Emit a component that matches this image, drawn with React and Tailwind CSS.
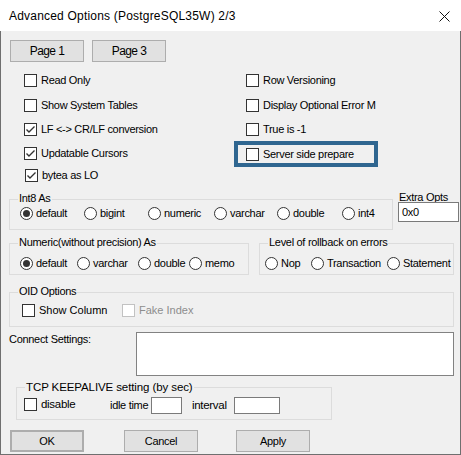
import React from "react";

function Check({ checked, disabled, className = "" }) {
  return (
    <div
      className={`w-[13px] h-[13px] shrink-0 border bg-white flex items-center justify-center ${
        disabled ? "border-[#c2c2c2]" : "border-[#333333]"
      } ${className}`}
    >
      {checked && (
        <svg width="11" height="11" viewBox="0 0 11 11">
          <polyline points="1.5,5.5 4,8 9.5,2.5" fill="none" stroke="#333333" strokeWidth="1.4" />
        </svg>
      )}
    </div>
  );
}

function CheckRow({ label, checked, className = "", disabled, textClass = "" }) {
  return (
    <div className={`flex items-center h-[13px] ${className}`}>
      <Check checked={checked} disabled={disabled} />
      <span className={`ml-[4px] whitespace-nowrap leading-[13px] ${disabled ? "text-[#8d8d8d]" : ""} ${textClass}`}>
        {label}
      </span>
    </div>
  );
}

function Radio({ label, checked, className = "" }) {
  return (
    <div className={`flex items-center h-[13px] shrink-0 ${className}`}>
      <div className="w-[13px] h-[13px] rounded-full border border-[#333333] bg-white flex items-center justify-center shrink-0">
        {checked && <div className="w-[7px] h-[7px] rounded-full bg-[#333333]" />}
      </div>
      <span className="ml-[3px] whitespace-nowrap leading-[13px]">{label}</span>
    </div>
  );
}

function Group({ label, className = "", boxClass = "", labelClass = "", children }) {
  return (
    <div className={`pt-[7px] ${className}`}>
      <div className={`relative border border-[#dcdcdc] ${boxClass}`}>
        <span
          className={`absolute -top-[8px] left-[8px] px-[1px] bg-[#f0f0f0] leading-[13px] whitespace-nowrap ${labelClass}`}
        >
          {label}
        </span>
        {children}
      </div>
    </div>
  );
}

function Btn({ children, className = "" }) {
  return (
    <div
      className={`h-[22px] w-[74px] flex items-center justify-center bg-[#e1e1e1] border border-[#adadad] ${className}`}
    >
      {children}
    </div>
  );
}

export default function App() {
  return (
    <div className="w-[461px] h-[455px] flex flex-col bg-[#f0f0f0] text-black text-[11px] tracking-[-0.3px] font-['Liberation_Sans',Arial,sans-serif] overflow-hidden">
      {/* Title bar */}
      <div className="h-[31px] shrink-0 bg-white flex items-center justify-between pl-[9px] pr-[11px]">
        <span className="text-[12px] leading-[16px] tracking-[0.2px] whitespace-nowrap">
          Advanced Options (PostgreSQL35W) 2/3
        </span>
        <svg width="11" height="11" viewBox="0 0 11 11" className="mt-[1px]">
          <path d="M0.5 0.5 L10.5 10.5 M10.5 0.5 L0.5 10.5" stroke="#111" strokeWidth="1" />
        </svg>
      </div>

      {/* Client area */}
      <div className="flex-1 flex flex-col border-x border-b border-[#6f6f6f]">
        {/* Page buttons */}
        <div className="flex mt-[9px] ml-[9px] gap-[8px] text-[12px] tracking-[-0.6px]">
          <Btn className="w-[58px]">Page 1</Btn>
          <Btn className="w-[58px]">Page 3</Btn>
        </div>

        {/* Checkboxes */}
        <div className="flex mt-[12px] ml-[23px]">
          <div className="w-[222px] flex flex-col">
            <CheckRow label="Read Only" />
            <CheckRow label="Show System Tables" className="mt-[12px]" />
            <CheckRow label="LF <-> CR/LF conversion" checked className="mt-[11px]" />
            <CheckRow label="Updatable Cursors" checked className="mt-[11px]" />
            <CheckRow label="bytea as LO" checked className="mt-[9px] ml-[1px]" />
          </div>
          <div className="flex flex-col">
            <CheckRow label="Row Versioning" />
            <CheckRow label="Display Optional Error M" className="mt-[12px]" />
            <CheckRow label="True is -1" className="mt-[11px]" />
            <div className="-ml-[12px] mt-[5px] w-[144px] h-[26px] border-4 border-[#2f6690] pl-[8px] flex items-center">
              <CheckRow label="Server side prepare" />
            </div>
          </div>
        </div>

        {/* Int8 row */}
        <div className="flex mt-[10px] ml-[8px]">
          <Group label="Int8 As" className="w-[384px]" boxClass="h-[31px] flex pt-[7px] pl-[10px]">
            <Radio label="default" checked className="w-[64px]" />
            <Radio label="bigint" className="w-[64px]" />
            <Radio label="numeric" className="w-[66px]" />
            <Radio label="varchar" className="w-[63px]" />
            <Radio label="double" className="w-[65px]" />
            <Radio label="int4" />
          </Group>
          <div className="ml-[5px] flex flex-col">
            <span className="leading-[10px] h-[10px] ml-[1px] whitespace-nowrap">Extra Opts</span>
            <div className="w-[61px] h-[20px] border border-[#7a7a7a] bg-white flex items-center pl-[3px] leading-[13px]">
              0x0
            </div>
          </div>
        </div>

        {/* Numeric / rollback row */}
        <div className="flex mt-[6px] ml-[8px]">
          <Group
            label="Numeric(without precision) As"
            className="w-[240px]"
            boxClass="h-[32px] flex pt-[13px] pl-[10px]"
          >
            <Radio label="default" checked className="w-[57px]" />
            <Radio label="varchar" className="w-[61px]" />
            <Radio label="double" className="w-[51px]" />
            <Radio label="memo" />
          </Group>
          <Group
            label="Level of rollback on errors"
            className="w-[195px] ml-[10px]"
            boxClass="h-[32px] flex pt-[13px] pl-[5px]"
          >
            <Radio label="Nop" className="w-[46px]" />
            <Radio label="Transaction" className="w-[76px]" />
            <Radio label="Statement" />
          </Group>
        </div>

        {/* OID options */}
        <div className="flex mt-[10px] ml-[8px]">
          <Group label="OID Options" className="w-[445px]" boxClass="h-[35px] flex pt-[11px] pl-[12px]">
            <CheckRow label="Show Column" className="w-[100px]" textClass="tracking-[0px] -ml-[1px]" />
            <CheckRow label="Fake Index" disabled textClass="tracking-[0px] -ml-[2px]" />
          </Group>
        </div>

        {/* Connect settings */}
        <div className="flex mt-[5px] ml-[8px]">
          <span className="w-[127px] leading-[13px] mt-[1px] whitespace-nowrap">Connect Settings:</span>
          <div className="w-[318px] h-[44px] border border-[#828282] bg-white" />
        </div>

        {/* TCP keepalive */}
        <div className="flex mt-[4px] ml-[15px]">
          <Group
            label="TCP KEEPALIVE setting (by sec)"
            className="w-[316px]"
            boxClass="h-[33px] flex items-start pt-[9px] pl-[7px]"
            labelClass="text-[11.5px] tracking-[-0.1px] -top-[9px] left-[7px] leading-[16px]"
          >
            <CheckRow label="disable" className="mt-[1px] w-[86px]" textClass="text-[11.5px]" />
            <span className="text-[11px] leading-[17px] w-[41px] whitespace-nowrap">idle time</span>
            <div className="w-[31px] h-[17px] border border-[#7a7a7a] bg-white" />
            <span className="text-[11.5px] leading-[17px] ml-[10px] w-[42px] whitespace-nowrap">interval</span>
            <div className="w-[46px] h-[17px] border border-[#7a7a7a] bg-white" />
          </Group>
        </div>

        {/* Bottom buttons */}
        <div className="flex mt-[10px] ml-[9px]">
          <Btn className="border-2 border-[#0078d7]">OK</Btn>
          <Btn className="ml-[40px]">Cancel</Btn>
          <Btn className="ml-[38px]">Apply</Btn>
        </div>
      </div>
    </div>
  );
}
